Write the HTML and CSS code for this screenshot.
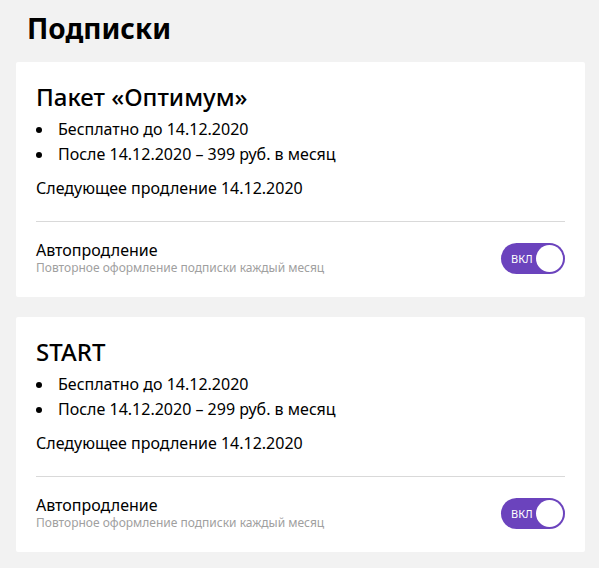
FILE: index.html
```html
<!DOCTYPE html>
<html lang="ru">
<head>
<meta charset="utf-8">
<link rel="stylesheet" href="styles.css">
</head>
<body>
<div class="page">
  <h1 class="page-title">Подписки</h1>
  <section class="card">
    <h2 class="card-title">Пакет «Оптимум»</h2>
    <ul class="list">
      <li>Бесплатно до 14.12.2020</li>
      <li>После 14.12.2020 – 399 руб. в месяц</li>
    </ul>
    <p class="next">Следующее продление 14.12.2020</p>
    <div class="divider"></div>
    <div class="auto">
      <div class="auto-text">
        <div class="auto-title">Автопродление</div>
        <div class="auto-sub">Повторное оформление подписки каждый месяц</div>
      </div>
      <div class="toggle"><span class="toggle-label">ВКЛ</span><span class="knob"></span></div>
    </div>
  </section>
  <section class="card">
    <h2 class="card-title">START</h2>
    <ul class="list">
      <li>Бесплатно до 14.12.2020</li>
      <li>После 14.12.2020 – 299 руб. в месяц</li>
    </ul>
    <p class="next">Следующее продление 14.12.2020</p>
    <div class="divider"></div>
    <div class="auto">
      <div class="auto-text">
        <div class="auto-title">Автопродление</div>
        <div class="auto-sub">Повторное оформление подписки каждый месяц</div>
      </div>
      <div class="toggle"><span class="toggle-label">ВКЛ</span><span class="knob"></span></div>
    </div>
  </section>
</div>
</body>
</html>
```
FILE: styles.css
```css
* { box-sizing: border-box; }
html, body { margin: 0; padding: 0; background: #f2f2f2; }
body { font-family: "Noto Sans", "Open Sans", sans-serif; color: #000; }
.page { padding: 8px 14px 0 16px; }
.page-title { margin: 0 0 14px 11px; font-size: 28px; font-weight: 700; line-height: 40px; }
.card { background: #fff; border-radius: 2px; padding: 19px 20px 21px 20px; margin-bottom: 20px; }
.card-title { margin: 0 0 4px; font-size: 24px; font-weight: 500; line-height: 32px; }
.list { margin: 0; padding: 0; list-style: none; font-size: 16px; line-height: 25px; }
.list li { position: relative; padding-left: 22px; }
.list li::before { content: ""; position: absolute; left: 0; top: 10px; width: 6px; height: 6px; border-radius: 50%; background: #000; }
.next { margin: 9px 0 0; font-size: 16px; line-height: 25px; }
.divider { height: 1px; background: #d9d9d9; margin: 20px 0 0; }
.auto { display: flex; align-items: center; justify-content: space-between; padding-top: 18px; }
.auto-title { font-size: 16px; line-height: 20px; }
.auto-sub { font-size: 12px; line-height: 16px; color: #a0a0a0; }
.toggle { width: 64px; height: 31px; border-radius: 16px; background: #6b43bd; position: relative; display: flex; align-items: center; padding-left: 10px; }
.toggle-label { color: #fff; font-size: 11px; }
.knob { position: absolute; right: 2px; top: 2px; width: 27px; height: 27px; border-radius: 50%; background: #fff; }
```
